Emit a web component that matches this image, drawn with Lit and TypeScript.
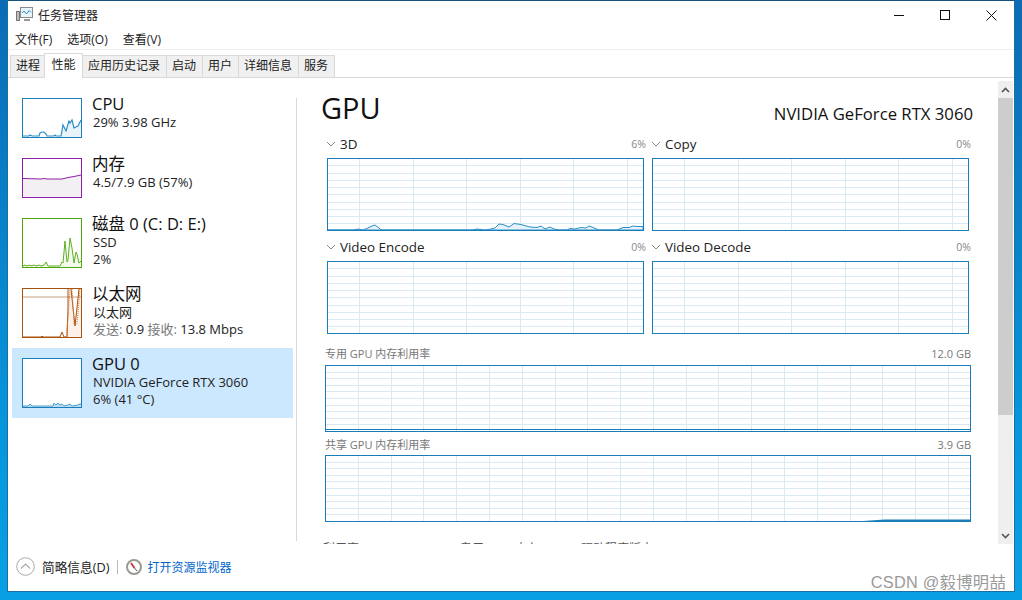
import { LitElement, html, css, svg } from "lit";
import { customElement } from "lit/decorators.js";

function gridLines(w: number, h: number, vx: number[], rows: number, rowH: number) {
  const lines = [];
  for (let i = 1; i <= rows; i++) {
    const y = Math.round(i * rowH) + 0.5;
    lines.push(svg`<line x1="0" x2=${w} y1=${y} y2=${y}></line>`);
  }
  for (const x of vx) lines.push(svg`<line x1=${x + 0.5} x2=${x + 0.5} y1="0" y2=${h}></line>`);
  return lines;
}

const GRAPH3D = "M0 72L27 72L31 71L36 72L41 70L45 68L48 67L52 70L54 72L145 72L150 71L158 72L164 71L168 70L172 66L176 66.5L182 69L187 65.5L194 66.5L203 69L210 69.5L214 68L218 71L223 69L227 71L232 72L240 72L243 70.5L248 71L254 69.5L259 70L262 68L266 69.5L272 72L290 72L296 69.5L302 69.5L306 68L310 68.5L316 68.5L316 72Z";
const CPU_LINE = "M1 38L7 38L8 37L10 38L17 38L18 35L20 34L22 34L24 36L25 38L32 38L33 37L34 38L39 38L41 27L44 33L47 23L48 25L50 22L52 30L54 29L56 28L57 26L59 22";
const MEM_LINE = "M1 20.5L19 21L22 20.5L25 21L40 21L46 19.5L52 18.5L59 17";
const DISK_LINE = "M1 48L3 47L5 48L8 47L9 48L12 47L14 48L17 47L19 48L22 47L24 44L26 48L38 48L40 44L41 45L43 23L45 44L46 42L48 20L50 30L52 45L54 34L55 36L57 45L59 43";
const GPU_LINE = "M1 48L6 48L8 46L10 48L31 48L32 45L34 47L36 45L38 47L40 46L42 48L46 47L48 46L50 48L56 47L57 46L59 46";

@customElement("app-root")
export class AppRoot extends LitElement {
  static styles = css`
    :host { display: block; width: 1022px; height: 600px; overflow: hidden; font-family: "Open Sans", "Noto Sans CJK SC", sans-serif; color: #111; }
    * { box-sizing: border-box; }
    .desktop { width: 1022px; height: 600px; padding: 0 7px 8px 7px; background: linear-gradient(180deg, #0b6bb5 0%, #0795db 70%, #0aa0e6 100%); }
    .win { height: 592px; background: #fff; border: 1px solid #1a6f9e; border-top: 1px solid #17527f; display: flex; flex-direction: column; position: relative; }
    .title { height: 29px; padding: 6px 0 0 8px; flex: none; display: flex; align-items: flex-start; gap: 5px; font-size: 12px; line-height: 17px; color: #222; }
    .title svg { flex: none; }
    .winbtns { margin: -2px 0 0 auto; display: flex; height: 20px; align-items: center; }
    .winbtn { width: 46px; height: 20px; display: flex; align-items: center; justify-content: center; }
    .menu { height: 20px; flex: none; display: flex; padding-left: 7px; gap: 15px; font-size: 12px; line-height: 20px; color: #222; border-bottom: 1px solid #f0f0f0; }
    .tabs { height: 28px; flex: none; display: flex; align-items: flex-end; padding-left: 2px; border-bottom: 1px solid #d9d9d9; font-size: 12px; }
    .tab { height: 22px; padding: 0 5.5px; border: 1px solid #d9d9d9; border-bottom: none; margin-left: -1px; background: #f0f0f0; line-height: 20px; color: #222; white-space: nowrap; }
    .tab:first-child { margin-left: 0; padding: 0 3.5px 0 5px; }
    .tab.on { height: 25px; background: #fff; position: relative; margin-bottom: -1px; padding: 0 6px 0 7px; line-height: 22px; z-index: 1; }
    .body { flex: none; height: 464px; display: flex; }
    .side { width: 285px; flex: none; padding: 10px 0 0 4px; display: flex; flex-direction: column; }
    .item { height: 70px; flex: none; display: flex; padding: 0 0 0 10px; gap: 11px; align-items: flex-start; }
    .item.short { height: 60px; }
    .item.on { background: #cce8ff; }
    .thumb { margin-top: 10px; flex: none; display: block; }
    .item .txt { padding-top: 5px; font-size: 13px; line-height: 17px; white-space: nowrap; color: #222; }
    .item .nm { font-size: 16.5px; line-height: 21px; color: #111; margin-left: -1px; }
    .item .dim { color: #777; }
    .divider { width: 1px; background: #d9d9d9; height: 443px; margin: 20px 0 0 3px; flex: none; }
    .main { flex: 1; min-width: 0; padding: 0 0 0 24px; overflow: hidden; height: 466px; }
    .head { display: flex; align-items: flex-end; justify-content: space-between; width: 652px; height: 40px; margin-top: 11px; }
    .head h1 { margin: 0; font-weight: 400; font-size: 29px; line-height: 40px; color: #111; position: relative; top: -1px; }
    .head .model { font-size: 16.7px; line-height: 22px; margin-bottom: 4px; color: #111; }
    .row { display: flex; gap: 8px; padding-left: 6px; }
    .row.second { margin-top: 1px; }
    .cell { width: 317px; }
    .cap { display: flex; align-items: center; height: 20px; font-size: 13.4px; color: #222; margin: 5px 0 4px; }
    .cap .chev { margin: 0 4px 0 -1px; }
    .cap .pc { margin-left: auto; font-size: 10.5px; color: #888; margin-right: -2px; }
    .wide-cap { display: flex; justify-content: space-between; width: 646px; height: 20px; align-items: center; font-size: 11px; color: #777; margin: 9px 0 2px 4px; }
    .wide-cap.next { margin: 2px 0 1px 4px; }
    .graph { display: block; }
    .graph.wide { margin-left: 4px; }
    .graph line { stroke: #d9eaf5; stroke-width: 1; }
    .cut { margin: 20px 0 0 2px; font-size: 12px; line-height: 14px; height: 14px; color: #555; white-space: nowrap; display: flex; }
    .c1 { width: 137px; } .c2 { width: 121px; } .c3 { width: 123px; }
    .sbar { flex: none; width: 15px; height: 463px; margin: 3px 1px 0 0; background: #efefef; display: flex; flex-direction: column; }
    .sb-btn { height: 17px; flex: none; display: flex; align-items: center; justify-content: center; }
    .sb-thumb { height: 317px; flex: none; background: #cdcdcd; }
    .sb-fill { flex: 1; }
    .foot { flex: 1; display: flex; align-items: center; padding: 0 0 0 8px; font-size: 12px; }
    .foot .sep { width: 1px; height: 14px; background: #bbb; margin: 0 8px; }
    .foot .lnk { color: #0066cc; margin-left: 5px; }
    .foot .lbl { margin-left: 7px; color: #222; font-size: 12.7px; }
    .wm { position: absolute; right: 8px; bottom: -1px; font-size: 16.3px; line-height: 20px; color: #9a9a9a; font-family: "Liberation Sans", "Noto Sans CJK SC", sans-serif; letter-spacing: 0.3px; white-space: nowrap; }
  `;

  private thumb(color: string, h: number, content: unknown) {
    return html`<svg class="thumb" width="60" height=${h} viewBox="0 0 60 ${h}">
      <rect width="60" height=${h} fill="#fff"></rect>
      ${content}
      <rect x="0.5" y="0.5" width="59" height=${h - 1} fill="none" stroke=${color}></rect>
    </svg>`;
  }

  private graph(w: number, h: number, vx: number[], rows: number, rowH: number, data?: unknown, cls = "") {
    return html`<svg class="graph ${cls}" width=${w} height=${h} viewBox="0 0 ${w} ${h}">
      ${gridLines(w, h, vx, rows, rowH)}
      ${data}
      <rect x="0.5" y="0.5" width=${w - 1} height=${h - 1} fill="none" stroke="#1a7cb8"></rect>
    </svg>`;
  }

  render() {
    const v4 = [32, 86, 139, 193, 246, 300];
    const vWide = [33, 66, 98, 131, 164, 197, 230, 262, 295, 328, 361, 393, 426, 459, 492, 525, 557, 590, 623];
    const chev = html`<svg class="chev" width="10" height="6" viewBox="0 0 10 6"><path d="M1 1L5 5L9 1" fill="none" stroke="#888" stroke-width="1"></path></svg>`;
    return html`<div class="desktop"><div class="win">
      <div class="title">
        <svg width="17" height="15" viewBox="0 0 17 15">
          <rect x="4.5" y="0.5" width="12" height="10" fill="#eaf4fb" stroke="#8a8a8a"></rect>
          <path d="M6 6L8 4L10.500 7L13 3.500L15 5.500" fill="none" stroke="#2b8fc9"></path>
          <rect x="0.5" y="4.500" width="3" height="9" fill="#bdbdbd" stroke="#777"></rect>
          <path d="M8 13H14" stroke="#999" stroke-width="2"></path>
        </svg>
        <span>任务管理器</span>
        <div class="winbtns">
          <div class="winbtn"><svg width="11" height="11" viewBox="0 0 11 11"><path d="M0 5.5H10" stroke="#111"></path></svg></div>
          <div class="winbtn"><svg width="11" height="11" viewBox="0 0 11 11"><rect x="0.5" y="0.5" width="9" height="9" fill="none" stroke="#111"></rect></svg></div>
          <div class="winbtn"><svg width="11" height="11" viewBox="0 0 11 11"><path d="M0.5 0.5L10.5 10.5M10.5 0.5L0.5 10.5" stroke="#111"></path></svg></div>
        </div>
      </div>
      <div class="menu"><span>文件(F)</span><span>选项(O)</span><span>查看(V)</span></div>
      <div class="tabs">
        <div class="tab">进程</div><div class="tab on">性能</div><div class="tab">应用历史记录</div><div class="tab">启动</div><div class="tab">用户</div><div class="tab">详细信息</div><div class="tab">服务</div>
      </div>
      <div class="body">
        <div class="side">
          <div class="item short">
            ${this.thumb("#1a7cb8", 40, svg`<path d="M39 38L41 27L44 33L47 23L48 25L50 22L52 30L54 29L56 28L57 26L59 22V39H39Z" fill="#eaf3fa"></path><path d=${CPU_LINE} fill="none" stroke="#2b8fc9" stroke-width="1.2"></path>`)}
            <div class="txt"><div class="nm">CPU</div><div>29% 3.98 GHz</div></div>
          </div>
          <div class="item short">
            ${this.thumb("#8f1ea8", 40, svg`<path d=${MEM_LINE + "V39H1Z"} fill="#f2f0f3"></path><path d=${MEM_LINE} fill="none" stroke="#8f1ea8"></path>`)}
            <div class="txt"><div class="nm">内存</div><div>4.5/7.9 GB (57%)</div></div>
          </div>
          <div class="item">
            ${this.thumb("#4fa60a", 50, svg`<path d=${DISK_LINE + "V49H1Z"} fill="#f3f9ec"></path><path d=${DISK_LINE} fill="none" stroke="#5dae22"></path>`)}
            <div class="txt"><div class="nm">磁盘 0 (C: D: E:)</div><div>SSD</div><div>2%</div></div>
          </div>
          <div class="item">
            ${this.thumb("#a7530f", 50, svg`
              <path d="M44 49L47 1H49L53 38L57 1H59V49Z" fill="#fdf1e8"></path>
              <path d="M1 9H59" stroke="#c9a27f"></path>
              <path d="M1 49L19 49L20 48L21 49L38 49L40 44L42 49L45 49L46 20L46 1M49 1L53 38L57 1" fill="none" stroke="#a7530f"></path>
              <path d="M44 49L46 30L48 1M50 1L52 36M55 36L58 1" fill="none" stroke="#d9814a" stroke-dasharray="1 1"></path>`)}
            <div class="txt"><div class="nm">以太网</div><div>以太网</div><div><span class="dim">发送:</span> 0.9 <span class="dim">接收:</span> 13.8 Mbps</div></div>
          </div>
          <div class="item on">
            ${this.thumb("#1a7cb8", 50, svg`<path d=${GPU_LINE + "V49H1Z"} fill="#bcdcf0"></path><path d=${GPU_LINE} fill="none" stroke="#4c9fd0"></path>`)}
            <div class="txt"><div class="nm">GPU 0</div><div>NVIDIA GeForce RTX 3060</div><div>6% (41 °C)</div></div>
          </div>
        </div>
        <div class="divider"></div>
        <div class="main">
          <div class="head"><h1>GPU</h1><span class="model">NVIDIA GeForce RTX 3060</span></div>
          <div class="row">
            <div class="cell"><div class="cap">${chev}3D<span class="pc">6%</span></div>
              ${this.graph(317, 73, v4, 9, 7.25, svg`<path d=${GRAPH3D} fill="#e6f1f9" stroke="#2b8fc9"></path>`)}</div>
            <div class="cell"><div class="cap">${chev}Copy<span class="pc">0%</span></div>
              ${this.graph(317, 73, v4, 9, 7.25)}</div>
          </div>
          <div class="row second">
            <div class="cell"><div class="cap">${chev}Video Encode<span class="pc">0%</span></div>
              ${this.graph(317, 73, v4, 9, 7.25)}</div>
            <div class="cell"><div class="cap">${chev}Video Decode<span class="pc">0%</span></div>
              ${this.graph(317, 73, v4, 9, 7.25)}</div>
          </div>
          <div class="wide-cap"><span>专用 GPU 内存利用率</span><span>12.0 GB</span></div>
          ${this.graph(646, 67, vWide, 9, 6.6, svg`<path d="M0 64.5H646" stroke="#1a7cb8"></path>`, "wide")}
          <div class="wide-cap next"><span>共享 GPU 内存利用率</span><span>3.9 GB</span></div>
          ${this.graph(646, 67, vWide, 9, 6.6, svg`<path d="M538 66L560 64.500L646 64.500V66Z" fill="#1a7cb8"></path>`, "wide")}
          <div class="cut"><span class="c1">利用率</span><span class="c2">专用 GPU 内存</span><span class="c3">驱动程序版本:</span><span>31.0.15.1659</span></div>
        </div>
        <div class="sbar">
          <div class="sb-btn"><svg width="9" height="6" viewBox="0 0 9 6"><path d="M1 5L4.5 1.5L8 5" fill="none" stroke="#555" stroke-width="1.6"></path></svg></div>
          <div class="sb-thumb"></div>
          <div class="sb-fill"></div>
          <div class="sb-btn"><svg width="9" height="6" viewBox="0 0 9 6"><path d="M1 1L4.5 4.5L8 1" fill="none" stroke="#555" stroke-width="1.6"></path></svg></div>
        </div>
      </div>
      <div class="foot">
        <svg width="19" height="19" viewBox="0 0 19 19"><circle cx="9.5" cy="9.5" r="8.800" fill="#fff" stroke="#aaa"></circle><path d="M5 11.5L9.5 7L14 11.5" fill="none" stroke="#aaa" stroke-width="1.2"></path></svg>
        <span class="lbl">简略信息(D)</span>
        <span class="sep"></span>
        <svg width="16" height="16" viewBox="0 0 16 16"><circle cx="8" cy="8" r="7" fill="#fff" stroke="#9a9a90" stroke-width="2"></circle><path d="M5 4L8.500 9" stroke="#c8242b" stroke-width="1.6"></path><path d="M8.500 9L11 12" stroke="#555"></path></svg>
        <span class="lnk">打开资源监视器</span>
        <span class="wm">CSDN @毅博明喆</span>
      </div>
    </div></div>`;
  }
}
